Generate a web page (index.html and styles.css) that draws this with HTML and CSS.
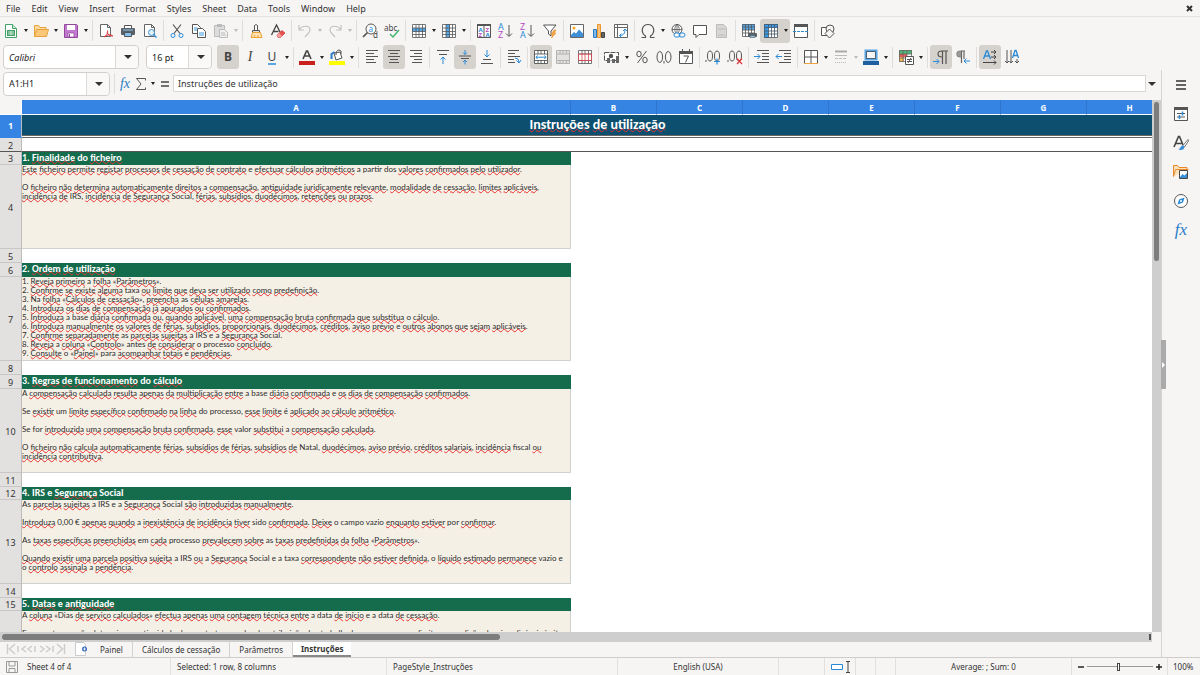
FILE: index.html
```html
<!DOCTYPE html>
<html lang="pt">
<head>
<meta charset="utf-8">
<title>Instruções de utilização</title>
<link rel="stylesheet" href="styles.css">
</head>
<body>
<div class="app">
<header class="menubar">
  <nav class="menus" aria-label="Menu">
    <button>File</button><button>Edit</button><button>View</button><button>Insert</button><button>Format</button><button>Styles</button><button>Sheet</button><button>Data</button><button>Tools</button><button>Window</button><button>Help</button>
  </nav>
  <button class="close" aria-label="Close"><svg width="7" height="7" viewBox="0 0 7 7"><path d="M1 1l5 5M6 1l-5 5" stroke="#333" stroke-width="2"/></svg></button>
</header>

<div class="toolbar">
  <button class="tb" aria-label="New"><svg viewBox="0 0 16 16"><path d="M2.500 1.500h7l4 4v9h-11z" fill="#fff" stroke="#43a267"/><path d="M9.500 1.500v4h4" fill="#cde9d6" stroke="#43a267"/><path d="M4 7h8v6H4z" fill="#43a267"/><path d="M5 9h6M5 11h6M8 8v4" stroke="#fff" stroke-width=".7"/></svg></button><button class="dd" aria-label="New options"></button>
  <button class="tb" aria-label="Open"><svg viewBox="0 0 16 16"><path d="M1.500 13.500v-11h4l1.500 2h6v2" fill="#fdd9a0" stroke="#e8a33d"/><path d="M1.500 13.500l2-7h12l-2 7z" fill="#fcc678" stroke="#e8a33d"/></svg></button><button class="dd" aria-label="Open options"></button>
  <button class="tb" aria-label="Save"><svg viewBox="0 0 16 16"><path d="M1.500 1.500h12l1 1v12h-13z" fill="#c178cf" stroke="#94469f"/><path d="M4 2h8v5H4z" fill="#fff"/><path d="M5 10h6v4H5z" fill="#fff" stroke="#94469f" stroke-width=".7"/><path d="M6.500 11v3" stroke="#94469f"/></svg></button><button class="dd" aria-label="Save options"></button>
  <i class="sep"></i>
  <button class="tb" aria-label="Export PDF"><svg viewBox="0 0 16 16"><path d="M2.500 1.500h7l3 3v9h-10z" fill="#fff" stroke="#666"/><path d="M9.500 1.500v3h3" fill="none" stroke="#666"/><path d="M6 14c3-1 4-4 3.500-6.500M9 9c1 3 3 4 6 4M6.500 13.500c3-2 5-2 8-1" fill="none" stroke="#e0383e"/></svg></button>
  <button class="tb" aria-label="Print"><svg viewBox="0 0 16 16"><path d="M4.500 5V2.500h7V5" fill="#fff" stroke="#555"/><rect x="1" y="5" width="14" height="7" rx="1" fill="#5a6268"/><path d="M3 7h10" stroke="#8dc6ee"/><path d="M4.500 9.500h7v4h-7z" fill="#83beec" stroke="#555"/></svg></button>
  <button class="tb" aria-label="Preview"><svg viewBox="0 0 16 16"><path d="M2.500 1.500h7l3 3v9h-10z" fill="#fff" stroke="#666"/><path d="M9.500 1.500v3h3" fill="none" stroke="#666"/><circle cx="9.500" cy="9.500" r="3" fill="#e3f1fb" stroke="#3a8fd0"/><path d="M11.500 11.500l3 3" stroke="#3a8fd0" stroke-width="1.500"/></svg></button>
  <i class="sep"></i>
  <button class="tb" aria-label="Cut"><svg viewBox="0 0 16 16"><path d="M4 1.500l7 9M12 1.500l-7 9" stroke="#555" stroke-width="1.200"/><circle cx="4" cy="12.500" r="2" fill="none" stroke="#2b8ad6"/><circle cx="12" cy="12.500" r="2" fill="none" stroke="#2b8ad6"/></svg></button>
  <button class="tb" aria-label="Copy"><svg viewBox="0 0 16 16"><path d="M1.500 1.500h5l3 3v6h-8z" fill="#fff" stroke="#555"/><path d="M6.500 5.500h5l3 3v6h-8z" fill="#fff" stroke="#555"/><path d="M3 5h3M3 7h3M8 10h5M8 12h5" stroke="#3a9be0"/></svg></button>
  <button class="tb" aria-label="Paste" disabled><svg viewBox="0 0 16 16"><path d="M1.500 2.500h10v11h-10z" fill="#ddd" stroke="#bbb"/><path d="M4 1h5v3H4z" fill="#bbb"/><path d="M6.500 6.500h5l3 3v5h-8z" fill="#f0f0f0" stroke="#bbb"/><path d="M8 10h4M8 12h5" stroke="#bbb"/></svg></button><button class="dd off" aria-label="Paste options"></button>
  <i class="sep"></i>
  <button class="tb" aria-label="Clone formatting"><svg viewBox="0 0 16 16"><path d="M6.500 7V2.500q1.500-2 3 0V7" fill="#fff" stroke="#555"/><path d="M4.500 7.500h7v2h-7z" fill="#ddd" stroke="#555"/><path d="M4.500 9.500l-1.500 5h11l-1.500-5z" fill="#fde3b5" stroke="#eda033"/><path d="M6 14l1-2M10 14v-2" stroke="#eda033"/></svg></button>
  <button class="tb" aria-label="Clear formatting"><svg viewBox="0 0 16 16"><path d="M1.500 12L6.500 2l3.500 7M3.500 8.500h5" fill="none" stroke="#444" stroke-width="1.300"/><path d="M7 12l5-4.500 3 2.500-4.500 4.500H8z" fill="#e55353" stroke="#c33" stroke-width=".7"/><path d="M7 12l2-2 3 3-1.500 1.500H8z" fill="#f5a0a0"/></svg></button>
  <i class="sep"></i>
  <button class="tb" aria-label="Undo" disabled><svg viewBox="0 0 16 16"><path d="M2 2v5h5M2 7c3-5 11-5 11 0 0 3-3 4-5 7" fill="none" stroke="#c4c2c0" stroke-width="1.200"/></svg></button><button class="dd off" aria-label="Undo options"></button>
  <button class="tb" aria-label="Redo" disabled><svg viewBox="0 0 16 16"><path d="M14 2v5H9M14 7C11 2 3 2 3 7c0 3 3 4 5 7" fill="none" stroke="#c4c2c0" stroke-width="1.200"/></svg></button><button class="dd off" aria-label="Redo options"></button>
  <i class="sep"></i>
  <button class="tb" aria-label="Find and replace"><svg viewBox="0 0 16 16"><circle cx="9" cy="6" r="5" fill="#fff" stroke="#555"/><path d="M5.500 9.500L1 14" stroke="#555" stroke-width="1.700"/><text x="6.500" y="8.500" class="g g-blue">a</text><text x="11" y="15" class="g">d</text></svg></button>
  <button class="tb" aria-label="Spelling"><svg viewBox="0 0 16 16"><text x="0" y="8" class="g">abc</text><path d="M6 11l3 3 6-7" fill="none" stroke="#3fb36b" stroke-width="1.400"/></svg></button>
  <i class="sep"></i>
  <button class="tb" aria-label="Row"><svg viewBox="0 0 16 16"><path d="M1.500 1.500h13v13h-13z" fill="#fff"/><path d="M1 5h14v3.500H1z" fill="#56a8e8"/><path d="M1.500 1.500h13v13h-13zM1.500 5h13M1.500 8.500h13M1.500 11.500h13M5 1.500v13M8 1.500v13M11.500 1.500v13" fill="none" stroke="#555" stroke-width=".8"/></svg></button><button class="dd" aria-label="Row options"></button>
  <button class="tb" aria-label="Column"><svg viewBox="0 0 16 16"><path d="M1.500 1.500h13v13h-13z" fill="#fff"/><path d="M5 1h4v14H5z" fill="#56a8e8"/><path d="M1.500 1.500h13v13h-13zM1.500 5h13M1.500 8.500h13M1.500 11.500h13M5 1.500v13M8.500 1.500v13M11.500 1.500v13" fill="none" stroke="#555" stroke-width=".8"/></svg></button><button class="dd" aria-label="Column options"></button>
  <i class="sep"></i>
  <button class="tb" aria-label="Sort"><svg viewBox="0 0 16 16"><path d="M1.500 1.500h13v13h-13zM8 2v12" fill="#fff" stroke="#555"/><path d="M1 1h14v2H1z" fill="#555"/><text x="2.500" y="8.500" class="s g-blue">A</text><text x="2.500" y="14" class="s g-pink">Z</text><text x="9.500" y="8.500" class="s g-pink">Z</text><text x="9.500" y="14" class="s g-blue">A</text></svg></button>
  <button class="tb" aria-label="Sort ascending"><svg viewBox="0 0 16 16"><text x="0" y="7" class="m g-blue">A</text><text x="0" y="15" class="m g-pink">Z</text><path d="M11 2v11M8 10.500l3 3 3-3" fill="none" stroke="#555"/></svg></button>
  <button class="tb" aria-label="Sort descending"><svg viewBox="0 0 16 16"><text x="0" y="7" class="m g-pink">Z</text><text x="0" y="15" class="m g-blue">A</text><path d="M11 2v11M8 10.500l3 3 3-3" fill="none" stroke="#555"/></svg></button>
  <button class="tb" aria-label="AutoFilter"><svg viewBox="0 0 16 16"><path d="M1.500 2h12.500l-5 6v5l-2.500-2V8z" fill="#fff" stroke="#555"/><path d="M12 7l-3 4.500h2L9.500 15l4.500-5h-2l2-3z" fill="#f7a64a" stroke="#e58a20" stroke-width=".6"/></svg></button>
  <i class="sep"></i>
  <button class="tb" aria-label="Insert image"><svg viewBox="0 0 16 16"><path d="M1.500 1.500h13v13h-13z" fill="#fff" stroke="#666"/><path d="M2 12l3-3 2 1.500 3-4 4 4V14H2z" fill="#3f8fd6"/><circle cx="5" cy="5" r="1.500" fill="#f5a623"/></svg></button>
  <button class="tb" aria-label="Insert chart"><svg viewBox="0 0 16 16"><path d="M2.500 6.500h3v8h-3z" fill="#7db9ec" stroke="#2b7cc7"/><path d="M6.500 1.500h3v13h-3z" fill="#fbc27c" stroke="#e8962e"/><path d="M10.500 9.500h3v5h-3z" fill="#666" stroke="#444"/></svg></button>
  <button class="tb" aria-label="Pivot table"><svg viewBox="0 0 16 16"><path d="M1.500 1.500h13v13h-13zM1.500 4.500h13M4.500 1.500v13" fill="#fff" stroke="#666"/><path d="M6.500 12.500c4 0 5.500-2 5.500-6M10 8l2-2 2 2M8.500 10.500l-2 2 2 2" fill="none" stroke="#2b8ad6"/></svg></button>
  <i class="sep"></i>
  <button class="tb" aria-label="Special character"><svg viewBox="0 0 16 16"><path d="M1.500 14.500h4v-1.500C0 9 2 1.500 8 1.500S16 9 10.500 13v1.500h4" fill="none" stroke="#555" stroke-width="1.200"/></svg></button><button class="dd" aria-label="Special character options"></button>
  <button class="tb" aria-label="Hyperlink"><svg viewBox="0 0 16 16"><circle cx="7" cy="6.500" r="5" fill="#fff" stroke="#555"/><path d="M2 6.500h10M7 1.500v10M7 1.500c-3 3-3 7 0 10M7 1.500c3 3 3 7 0 10" fill="none" stroke="#555" stroke-width=".8"/><rect x="4" y="10" width="6" height="4" rx="2" fill="#fff" stroke="#2b8ad6"/><rect x="9" y="10" width="6" height="4" rx="2" fill="none" stroke="#2b8ad6"/></svg></button>
  <button class="tb" aria-label="Comment"><svg viewBox="0 0 16 16"><path d="M1.500 2.500h13v9H7l-3 3v-3H1.500z" fill="#fff" stroke="#555"/></svg></button>
  <button class="tb" aria-label="Headers and footers" disabled><svg viewBox="0 0 16 16"><path d="M2.500 1.500h7l3 3v10h-10z" fill="#d8d7d5" stroke="#bbb"/><path d="M4 6h7M4 12h7" stroke="#bbb"/></svg></button>
  <i class="sep"></i>
  <button class="tb" aria-label="Print area"><svg viewBox="0 0 16 16"><path d="M1.500 1.500h12v12h-12z" fill="#fff"/><path d="M1 1h13v6H1z" fill="#56a8e8"/><path d="M1.500 1.500h12v12h-12zM1.500 4h12M1.500 7h12M1.500 10h12M4.500 1.500v12M7.500 1.500v12M10.500 1.500v12" fill="none" stroke="#555" stroke-width=".8"/><rect x="7" y="10" width="9" height="4" rx="1" fill="#5a6268"/><path d="M9 12.500h5v2H9z" fill="#8dc6ee" stroke="#555" stroke-width=".6"/></svg></button>
  <span class="split on"><button class="tb" aria-label="Freeze"><svg viewBox="0 0 16 16"><path d="M1.500 1.500h13v13h-13z" fill="#fff"/><path d="M1 1h14v3.500H5.500V15H1z" fill="#3d96e0"/><path d="M1.500 1.500h13v13h-13zM1.500 4.500h13M1.500 8h13M1.500 11h13M5.500 1.500v13M8.500 1.500v13M11.500 1.500v13" fill="none" stroke="#456" stroke-width=".8"/></svg></button><button class="dd" aria-label="Freeze options"></button></span>
  <button class="tb" aria-label="Split window"><svg viewBox="0 0 16 16"><path d="M1.500 1.500h13v13h-13z" fill="#fff" stroke="#555"/><path d="M1 1h14v3H1z" fill="#555"/><path d="M0 8.500h16" stroke="#2b8ad6" stroke-dasharray="3 1"/></svg></button>
  <i class="sep"></i>
  <button class="tb" aria-label="Draw functions"><svg viewBox="0 0 16 16"><path d="M1.500 4.500h8v8h-8z" fill="#fff" stroke="#555"/><circle cx="10" cy="6" r="4" fill="#f6f5f4" stroke="#555"/><path d="M9.500 6l4.500 4.500-4.500 4.500L5 10.500z" fill="#f6f5f4" stroke="#555"/></svg></button>
</div>

<div class="toolbar format">
  <label class="combo font"><select aria-label="Font name"><option>Calibri</option></select></label>
  <label class="combo size"><select aria-label="Font size"><option>16 pt</option></select></label>
  <button class="tb on" aria-label="Bold"><b class="ch">B</b></button>
  <button class="tb" aria-label="Italic"><i class="ch it">I</i></button>
  <button class="tb" aria-label="Underline"><span class="ch un">U</span></button><button class="dd" aria-label="Underline options"></button>
  <i class="sep"></i>
  <button class="tb" aria-label="Font color"><svg viewBox="0 0 16 16"><path d="M4 10L7.500 2h1L12 10M5.500 7h5" fill="none" stroke="#444" stroke-width="1.600"/><path d="M0 12h16v4H0z" fill="#c9211e"/></svg></button><button class="dd" aria-label="Font color options"></button>
  <button class="tb" aria-label="Background color"><svg viewBox="0 0 16 16"><path d="M5 4l6-1 2 6-6 2z" fill="#fff" stroke="#555"/><path d="M7 6q0-5 3-5t2 4" fill="none" stroke="#555"/><path d="M2.500 10V5l3-2" fill="none" stroke="#2b7cc7" stroke-width="2"/><path d="M0 12h16v4H0z" fill="#ff0"/></svg></button><button class="dd" aria-label="Background color options"></button>
  <i class="sep"></i>
  <button class="tb" aria-label="Align left"><svg viewBox="0 0 16 16"><path d="M2 1.500h12M2 4.500h8M2 7.500h12M2 10.500h8M2 13.500h10" stroke="#555"/></svg></button>
  <button class="tb on" aria-label="Align center"><svg viewBox="0 0 16 16"><path d="M2 1.500h12M4 4.500h8M2 7.500h12M4 10.500h8M3 13.500h10" stroke="#555"/></svg></button>
  <button class="tb" aria-label="Align right"><svg viewBox="0 0 16 16"><path d="M2 1.500h12M6 4.500h8M2 7.500h12M6 10.500h8M4 13.500h10" stroke="#555"/></svg></button>
  <i class="sep"></i>
  <button class="tb" aria-label="Align top"><svg viewBox="0 0 16 16"><path d="M2 1.500h12M4 5.500h8" stroke="#555"/><path d="M8 15V8M5.500 10.500L8 8l2.500 2.500" fill="none" stroke="#2b8ad6"/></svg></button>
  <button class="tb on" aria-label="Center vertically"><svg viewBox="0 0 16 16"><path d="M2 7h12M4 9.500h8" stroke="#555"/><path d="M8 1v4.500M6 3.500l2 2 2-2M8 15.500V11M6 13l2-2 2 2" fill="none" stroke="#2b8ad6"/></svg></button>
  <button class="tb" aria-label="Align bottom"><svg viewBox="0 0 16 16"><path d="M2 14.500h12M4 10.500h8" stroke="#555"/><path d="M8 1v7M5.500 5.500L8 8l2.500-2.500" fill="none" stroke="#2b8ad6"/></svg></button>
  <i class="sep"></i>
  <button class="tb" aria-label="Wrap text"><svg viewBox="0 0 16 16"><path d="M2 1.500h11M2 4.500h7M2 7.500h12M2 10.500h6M2 13.500h7" stroke="#555"/><path d="M9 9q4 0 4 4M10.500 11.500l2.500 2.500 2-3" fill="none" stroke="#2b8ad6"/></svg></button>
  <i class="sep"></i>
  <button class="tb on" aria-label="Merge and center"><svg viewBox="0 0 16 16"><path d="M1.500 1.500h13v13h-13z" fill="#fff"/><path d="M1.500 1.500h13v13h-13zM1.500 5h13M1.500 11.500h13M5 1.500v3.500M8 1.500v3.500M11.500 1.500v3.500M5 11.500v3M8 11.500v3M11.500 11.500v3" fill="none" stroke="#444" stroke-width=".8"/><path d="M3 8.200h10M4.500 6.500L3 8.200l1.500 1.800M11.500 6.500L13 8.200l-1.500 1.800" fill="none" stroke="#2b8ad6"/></svg></button>
  <button class="tb" aria-label="Merge" disabled><svg viewBox="0 0 16 16"><path d="M1.500 1.500h13v13h-13zM1.500 5h13M1.500 11.500h13M5 1.500v3.500M8 1.500v3.500M11.500 1.500v3.500M5 11.500v3M8 11.500v3M11.500 11.500v3" fill="#e2e1df" stroke="#b5b3b1"/></svg></button>
  <button class="tb" aria-label="Unmerge"><svg viewBox="0 0 16 16"><path d="M1.500 1.500h13v13h-13zM1.500 5h13M1.500 11.500h13M5 1.500v3.500M8 1.500v3.500M11.500 1.500v3.500M5 11.500v3M8 11.500v3M11.500 11.500v3" fill="#fff" stroke="#555" stroke-width=".8"/><path d="M1.500 5h13v6.500h-13zM5 5v6.500M8 5v6.500M11.500 5v6.500" fill="none" stroke="#e0484c" stroke-width=".8"/></svg></button>
  <i class="sep"></i>
  <button class="tb" aria-label="Currency"><svg viewBox="0 0 16 16"><path d="M.5 3.500h14v8H.5z" fill="#fff" stroke="#555" stroke-dasharray="5 1"/><circle cx="7" cy="7" r="2.200" fill="#555"/><path d="M3 9h3v5H3zM8 10h3v4H8zM12 7h3v7h-3z" fill="#666"/></svg></button><button class="dd" aria-label="Currency options"></button>
  <button class="tb" aria-label="Percent"><svg viewBox="0 0 16 16"><path d="M12.500 2l-9 12" stroke="#555"/><ellipse cx="5" cy="5" rx="2.200" ry="2.800" fill="none" stroke="#555"/><ellipse cx="11" cy="11" rx="2.200" ry="2.800" fill="none" stroke="#555"/></svg></button>
  <button class="tb" aria-label="Number"><svg viewBox="0 0 16 16"><ellipse cx="3.800" cy="8" rx="2.800" ry="5.500" fill="none" stroke="#555"/><ellipse cx="12.200" cy="8" rx="2.800" ry="5.500" fill="none" stroke="#555"/><path d="M8 12v2.500" stroke="#555"/></svg></button>
  <button class="tb" aria-label="Date"><svg viewBox="0 0 16 16"><path d="M1.500 2.500h13v12h-13z" fill="#fff" stroke="#555"/><path d="M1 2h14v3H1zM4 0h1v2H4zM11 0h1v2h-1z" fill="#555"/><path d="M5.500 7h5l-3 6.500" fill="none" stroke="#555"/></svg></button>
  <i class="sep"></i>
  <button class="tb" aria-label="Add decimal"><svg viewBox="0 0 16 16"><ellipse cx="5" cy="7" rx="2.500" ry="5" fill="none" stroke="#555"/><ellipse cx="12" cy="7" rx="2.500" ry="5" fill="none" stroke="#555"/><path d="M1 11v2" stroke="#555"/><path d="M9 12.500h6M12 9.500v6" stroke="#2b8ad6" stroke-width="1.200"/></svg></button>
  <button class="tb" aria-label="Delete decimal"><svg viewBox="0 0 16 16"><ellipse cx="5" cy="7" rx="2.500" ry="5" fill="none" stroke="#555"/><ellipse cx="12" cy="7" rx="2.500" ry="5" fill="none" stroke="#555"/><path d="M1 11v2" stroke="#555"/><path d="M10 9.500l5 5.500M15 9.500L10 15" stroke="#e0383e" stroke-width="1.200"/></svg></button>
  <i class="sep"></i>
  <button class="tb" aria-label="Increase indent"><svg viewBox="0 0 16 16"><path d="M3 1.500h12M8 4.500h7M8 7.500h7M8 10.500h7M3 13.500h12" stroke="#555"/><path d="M0 7.500h6M3.500 5L6 7.500 3.500 10" fill="none" stroke="#2b8ad6"/></svg></button>
  <button class="tb" aria-label="Decrease indent"><svg viewBox="0 0 16 16"><path d="M3 1.500h12M8 4.500h7M8 7.500h7M8 10.500h7M3 13.500h12" stroke="#555"/><path d="M0 7.500h6M2.500 5L0 7.500 2.500 10" fill="none" stroke="#2b8ad6"/></svg></button>
  <i class="sep"></i>
  <button class="tb" aria-label="Borders"><svg viewBox="0 0 16 16"><path d="M1.500 1.500h13v13h-13z" fill="#fff" stroke="#555"/><path d="M8 2v12M2 8h12" stroke="#555"/><path d="M1 14.500h14" stroke="#f0a440"/></svg></button><button class="dd" aria-label="Border options"></button>
  <button class="tb" aria-label="Border style" disabled><svg viewBox="0 0 16 16"><path d="M2 2.500h12" stroke="#aaa" stroke-width="2"/><path d="M2 6.500h12" stroke="#bbb"/><path d="M2 9.500h12" stroke="#bbb" stroke-dasharray="3 1"/><path d="M2 13.500h12" stroke="#bbb" stroke-dasharray="1 1"/></svg></button><button class="dd off" aria-label="Border style options"></button>
  <button class="tb" aria-label="Border color"><svg viewBox="0 0 16 16"><path d="M2.500 1.500h11v9h-11z" fill="#f6f5f4" stroke="#5aa5e4" stroke-width="2"/><path d="M3.500 2.500h9v7h-9z" fill="none" stroke="#345" stroke-width=".8"/><path d="M0 12h16v4H0z" fill="#1f5fa0"/></svg></button><button class="dd" aria-label="Border color options"></button>
  <i class="sep"></i>
  <button class="tb" aria-label="Conditional formatting"><svg viewBox="0 0 16 16"><path d="M1.500 1.500h12v11h-12z" fill="#fff"/><path d="M1 1h13v4H1z" fill="#4fb877"/><path d="M1 5h8v3H1z" fill="#e85a5a"/><path d="M1 8h5v5H1z" fill="#f5b95a"/><path d="M1.500 1.500h12v11h-12zM1.500 5h12M1.500 9h12M5 1.500v11M9 1.500v11" fill="none" stroke="#666" stroke-width=".8"/><path d="M7.500 7.500h8v8h-8z" fill="#fff" stroke="#555"/><path d="M9 10.500h5M9 12.500h5M13 9l-3 5" stroke="#555"/></svg></button><button class="dd" aria-label="Conditional formatting options"></button>
  <i class="sep"></i>
  <button class="tb on" aria-label="Left to right"><svg viewBox="0 0 16 16"><path d="M9 8q-4 0-4-3t4-3h6M9.500 2v13M13 2v13" fill="none" stroke="#555" stroke-width="1.200"/><path d="M0 12.500h6M3.500 10L6 12.500 3.500 15" fill="none" stroke="#2b8ad6"/></svg></button>
  <button class="tb" aria-label="Right to left"><svg viewBox="0 0 16 16"><path d="M6 8Q2 8 2 5t4-3h4M6.500 2v12M9 2v8" fill="none" stroke="#666" stroke-width="1.200"/><path d="M6 8Q2 8 2 5t4-3z" fill="#999"/><path d="M15 12H9M11.500 9.500L9 12l2.500 2.500" fill="none" stroke="#2b8ad6"/></svg></button>
  <i class="sep"></i>
  <button class="tb on" aria-label="Horizontal text"><svg viewBox="0 0 16 16"><path d="M1.500 10L4.500 2h1l3 8M2.500 7h5" fill="none" stroke="#2b8ad6" stroke-width="1.300"/><path d="M9 3h5M12 1l2 2-2 2M9 8h5M12 6l2 2-2 2M1 13.500h13M12 11.500l2 2-2 2" fill="none" stroke="#444"/></svg></button>
  <button class="tb" aria-label="Vertical text"><svg viewBox="0 0 16 16"><path d="M8.500 9L11 1.500h1L14.500 9M9.500 6.500h4" fill="none" stroke="#2b8ad6" stroke-width="1.300"/><path d="M3 1v13M1 12l2 2 2-2M7 1v13M5.500 12L7 14l2-2M13 10v4M11 12l2 2 2-2" fill="none" stroke="#555"/></svg></button>
</div>

<div class="middle">
<main class="work">
  <div class="formula">
    <label class="combo name"><select aria-label="Name box"><option>A1:H1</option></select></label>
    <i class="sep"></i>
    <button class="fb fx" aria-label="Function wizard">fx</button>
    <button class="fb" aria-label="Sum"><svg width="12" height="14" viewBox="0 0 12 14"><path d="M10.500 3.500v-2h-9L6 7l-4.500 5.500h9v-2" fill="none" stroke="#555"/></svg></button>
    <button class="dd" aria-label="Sum options"></button>
    <button class="fb" aria-label="Formula"><svg width="10" height="8" viewBox="0 0 10 8"><path d="M1 2h8M1 6h8" stroke="#444" stroke-width="1.500"/></svg></button>
    <input type="text" class="line" aria-label="Formula input" value="Instruções de utilização">
    <button class="expand" aria-label="Expand formula bar"></button>
  </div>
  <div class="view">
    <div class="canvas">
      <table class="sheet">
        <colgroup><col class="c-num"><col class="c-a"><col><col><col><col><col><col><col></colgroup>
        <thead><tr><th class="corner"></th><th>A</th><th>B</th><th>C</th><th>D</th><th>E</th><th>F</th><th>G</th><th>H</th></tr></thead>
        <tbody>
        <tr class="r-title"><th>1</th><td colspan="8"><div class="spell">Instruções de utilização</div></td></tr>
        <tr class="r-gap r-frozen"><th>2</th><td colspan="8"></td></tr>
        <tr class="r-head short"><th>3</th><td><div class="spell">1. Finalidade do ficheiro</div></td></tr>
        <tr class="r-body"><th>4</th><td><div class="note spell">Este ficheiro permite registar processos de cessação de contrato e efectuar cálculos aritméticos a partir dos valores confirmados pelo utilizador.

O ficheiro não determina automaticamente direitos a compensação, antiguidade juridicamente relevante, modalidade de cessação, limites aplicáveis,
incidência de IRS, incidência de Segurança Social, férias, subsídios, duodécimos, retenções ou prazos.</div></td></tr>
        <tr class="r-gap"><th>5</th><td></td></tr>
        <tr class="r-head"><th>6</th><td><div class="spell">2. Ordem de utilização</div></td></tr>
        <tr class="r-body"><th>7</th><td><div class="note spell">1. Reveja primeiro a folha «Parâmetros».
2. Confirme se existe alguma taxa ou limite que deva ser utilizado como predefinição.
3. Na folha «Cálculos de cessação», preencha as células amarelas.
4. Introduza os dias de compensação já apurados ou confirmados.
5. Introduza a base diária confirmada ou, quando aplicável, uma compensação bruta confirmada que substitua o cálculo.
6. Introduza manualmente os valores de férias, subsídios, proporcionais, duodécimos, créditos, aviso prévio e outros abonos que sejam aplicáveis.
7. Confirme separadamente as parcelas sujeitas a IRS e a Segurança Social.
8. Reveja a coluna «Controlo» antes de considerar o processo concluído.
9. Consulte o «Painel» para acompanhar totais e pendências.</div></td></tr>
        <tr class="r-gap"><th>8</th><td></td></tr>
        <tr class="r-head"><th>9</th><td><div class="spell">3. Regras de funcionamento do cálculo</div></td></tr>
        <tr class="r-body"><th>10</th><td><div class="note spell">A compensação calculada resulta apenas da multiplicação entre a base diária confirmada e os dias de compensação confirmados.

Se existir um limite específico confirmado na linha do processo, esse limite é aplicado ao cálculo aritmético.

Se for introduzida uma compensação bruta confirmada, esse valor substitui a compensação calculada.

O ficheiro não calcula automaticamente férias, subsídios de férias, subsídios de Natal, duodécimos, aviso prévio, créditos salariais, incidência fiscal ou
incidência contributiva.</div></td></tr>
        <tr class="r-gap"><th>11</th><td></td></tr>
        <tr class="r-head short"><th>12</th><td><div class="spell">4. IRS e Segurança Social</div></td></tr>
        <tr class="r-body"><th>13</th><td><div class="note spell">As parcelas sujeitas a IRS e a Segurança Social são introduzidas manualmente.

Introduza 0,00 € apenas quando a inexistência de incidência tiver sido confirmada. Deixe o campo vazio enquanto estiver por confirmar.

As taxas específicas preenchidas em cada processo prevalecem sobre as taxas predefinidas da folha «Parâmetros».

Quando existir uma parcela positiva sujeita a IRS ou a Segurança Social e a taxa correspondente não estiver definida, o líquido estimado permanece vazio e
o controlo assinala a pendência.</div></td></tr>
        <tr class="r-gap"><th>14</th><td></td></tr>
        <tr class="r-head short"><th>15</th><td><div class="spell">5. Datas e antiguidade</div></td></tr>
        <tr class="r-body"><th></th><td><div class="note spell">A coluna «Dias de serviço calculados» efectua apenas uma contagem técnica entre a data de início e a data de cessação.

Esse contagem não determina a antiguidade dos contratos, o valor da retribuição dos trabalhadores ou os prazos, limites e condições legais aplicáveis à situação.</div></td></tr>
        </tbody>
      </table>
    </div>
    <div class="vbar"><div class="vthumb"></div></div>
    <div class="hbar"><div class="hthumb"></div><div class="hgrip"></div></div>
  </div>
  <nav class="tabs" aria-label="Sheets">
    <svg class="nav" viewBox="0 0 60 12"><path d="M1.500 1v10M9 1L3.500 6 9 11M20 3l-4 3 4 3M26 3l-4 3 4 3M34 3l4 3-4 3M40 3l4 3-4 3M51 1l5.500 5-5.500 5M58.500 1v10M12 3v6M29 3v6M47 3v6" fill="none" stroke="#cfcdcb" stroke-width="1.500"/></svg>
    <button class="add" aria-label="Add sheet"><svg width="14" height="14" viewBox="0 0 14 14"><path d="M1.500.5h8l2 2v11h-10z" fill="#fff" stroke="#ccc"/><circle cx="10.500" cy="7" r="2.500" fill="#3568b8"/><path d="M9 7h3M10.500 5.500v3" stroke="#fff" stroke-width=".8"/></svg></button>
    <button class="tab">Painel</button><button class="tab">Cálculos de cessação</button><button class="tab">Parâmetros</button><button class="tab current">Instruções</button>
  </nav>
</main>
<aside class="side">
  <i class="grip"></i>
  <button aria-label="Sidebar settings"><svg viewBox="0 0 16 16"><path d="M3 4h10M3 8h10M3 12h10" stroke="#333" stroke-width="1.500"/></svg></button>
  <button aria-label="Properties"><svg viewBox="0 0 16 16"><path d="M1.500 1.500h13v13h-13z" fill="#fff" stroke="#555"/><path d="M1 1h14v3H1z" fill="#555"/><path d="M4 7.500h8M4 11h8" stroke="#555"/><path d="M9.500 5.500v4M6.500 9v4" stroke="#2b8ad6" stroke-width="1.500"/></svg></button>
  <button aria-label="Styles"><svg viewBox="0 0 16 16"><path d="M1 12L5.500 1.500h1L10 10M2.500 8.500h6" fill="none" stroke="#444" stroke-width="1.600"/><path d="M15 4.500l-5 6 1.500 1.500 4-6z" fill="#fff" stroke="#555" stroke-width=".8"/><path d="M10 10.500c-2 0-2 2-4.500 4 3 1 6 0 6-2.500z" fill="#3a8fd6"/></svg></button>
  <button aria-label="Gallery"><svg viewBox="0 0 16 16"><path d="M.5 12.500v-11h4l1.500 2h8v2M.5 12.500l2-7h13" fill="#fde1b8" stroke="#e8892e"/><path d="M6.500 6.500h8v8h-8z" fill="#fff" stroke="#444"/><path d="M7 13l2.500-3 2 1.500L14 9v5H7z" fill="#3a8fd6"/></svg></button>
  <button aria-label="Navigator"><svg viewBox="0 0 16 16"><circle cx="8" cy="8" r="6.500" fill="#fff" stroke="#555"/><path d="M11.500 4.500l-1.500 5-5.500 2L6 6.500z" fill="#2b8ad6"/><circle cx="8" cy="8" r="1" fill="#fff"/></svg></button>
  <button class="fx" aria-label="Functions">fx</button>
</aside>
</div>

<footer class="status">
  <div class="doc"><svg width="12" height="12" viewBox="0 0 12 12"><path d="M.5.500h11v11H.5zM3 1v4h6V1M3 11V7.500h6V11" fill="none" stroke="#999"/></svg><span>Sheet 4 of 4</span></div>
  <div>Selected: 1 row, 8 columns</div>
  <div>PageStyle_Instruções</div>
  <div class="mid">English (USA)</div>
  <div></div>
  <div class="sel"><svg width="20" height="12" viewBox="0 0 20 12"><path d="M.5 3.500h11v5H.5z" fill="#fff" stroke="#2b8ad6"/><path d="M15 .5h4M15 11.500h4M17 .5v11" stroke="#444"/></svg></div>
  <div></div>
  <div></div>
  <div class="mid">Average: ; Sum: 0</div>
  <div class="zoom"><button aria-label="Zoom out"><svg width="8" height="8" viewBox="0 0 8 8"><path d="M1 4h6" stroke="#222" stroke-width="1.500"/></svg></button><input type="range" aria-label="Zoom" min="0" max="100" value="48"><button aria-label="Zoom in"><svg width="8" height="8" viewBox="0 0 8 8"><path d="M1 4h6M4 1v6" stroke="#222" stroke-width="1.500"/></svg></button></div>
  <div class="pct">100%</div>
</footer>
</div>
<script src="spell.js"></script>
</body>
</html>
```
FILE: styles.css
```css
* { box-sizing: border-box; }
body {
  margin: 0;
  font-family: "Noto Sans", sans-serif;
  font-size: 9px;
  color: #333;
  background: #f6f5f4;
}
button { font: inherit; color: inherit; background: none; border: 0; padding: 0; }
.app { display: flex; flex-direction: column; height: 100vh; overflow: hidden; }

.menubar { display: flex; flex: none; height: 17px; border-bottom: 1px solid #e4e2e0; }
.menus { display: flex; flex: 1; gap: 11px; padding-left: 6px; }
.close { width: 22px; display: flex; align-items: center; justify-content: center; }

.toolbar { display: flex; flex: none; align-items: center; height: 27px; }
.toolbar.format { height: 26px; padding-left: 3px; }
.tb { flex: none; width: 22px; height: 24px; display: flex; align-items: center; justify-content: center; border-radius: 3px; }
.tb svg { width: 16px; height: 16px; overflow: visible; }
.on { background: #d5d1cd; border-radius: 3px; }
.split { display: flex; align-items: center; }
.dd { flex: none; width: 8px; height: 24px; display: flex; align-items: center; justify-content: center; }
.dd::before { content: ""; border: 2px solid transparent; border-top: 3px solid #222; border-bottom: 0; }
.dd.off::before { border-top-color: #bbb; }
.sep { flex: none; width: 1px; height: 21px; margin: 0 2px; background: #e0dedc; }
.g { font: 8px "Noto Sans", sans-serif; fill: #444; }
.s { font: bold 6px "Noto Sans", sans-serif; }
.m { font: 9px "Noto Sans", sans-serif; }
.g-blue { fill: #2b8ad6; }
.g-pink { fill: #b74bc4; }
.ch { font-size: 12px; line-height: 16px; color: #444; }
.it { font-family: "Liberation Serif", serif; font-size: 14px; }
.un { border-bottom: 2px solid #5aa5e4; line-height: 13px; }

.combo { position: relative; flex: none; height: 24px; background: #fff; border: 1px solid #d2cfcc; border-radius: 4px; }
.combo select { appearance: none; width: 100%; height: 100%; padding: 0 26px 0 5px; border: 0; background: none; font: 9px "Noto Sans", sans-serif; color: #222; }
.combo::before { content: ""; position: absolute; right: 0; top: 0; bottom: 0; width: 22px; border-left: 1px solid #dcdad8; background: #faf9f8; border-radius: 0 4px 4px 0; }
.combo::after { content: ""; position: absolute; right: 6px; top: 9px; border: 4px solid transparent; border-top-color: #333; border-bottom: 0; pointer-events: none; }
.combo.font { width: 136px; margin-right: 7px; }
.combo.font select { font-style: italic; }
.combo.size { width: 66px; margin-right: 5px; }
.combo.name { width: 107px; margin-right: 2px; }

.middle { display: flex; flex: 1; min-height: 0; }
.work { display: flex; flex-direction: column; flex: 1; min-width: 0; }
.formula { display: flex; flex: none; align-items: center; height: 30px; padding: 0 4px 3px 3px; }
.fb { flex: none; display: flex; align-items: center; justify-content: center; width: 16px; height: 20px; }
.fb.fx { font: italic 14px "Liberation Serif", serif; }
.fx { color: #2b7cc7; }
.line { flex: 1; min-width: 0; height: 17px; padding: 0 4px; border: 1px solid #dad8d6; background: #fff; font: 9px "Noto Sans", sans-serif; color: #333; }
.expand { width: 11px; display: flex; justify-content: center; }
.expand::before { content: ""; border: 4px solid transparent; border-top-color: #333; border-bottom: 0; }

.view { flex: 1; min-height: 0; display: grid; grid-template: minmax(0, 1fr) 10px / minmax(0, 1fr) 9px; }
.canvas { overflow: hidden; background: #fff; }
.vbar { background: #cecece; padding: 2px 2px 0; }
.vthumb { height: 30%; background: #7d7d7d; border-radius: 3px; }
.hbar { display: flex; justify-content: space-between; padding: 2px 1px 2px 2px; background: #cecece; }
.hthumb { width: 498px; background: #7d7d7d; border-radius: 3px; }
.hgrip { width: 2px; background: #555; }

.sheet { table-layout: fixed; width: 1173px; border-spacing: 0; }
.sheet col { width: 86px; }
.sheet .c-num { width: 22px; }
.sheet .c-a { width: 549px; }
.sheet td, .sheet th { padding: 0; overflow: hidden; }
.sheet thead th { height: 15px; background: #3584e4; color: #fff; font-size: 8px; line-height: 13px; border-right: 1px solid #2f75ca; border-bottom: 1px solid #fff; }
.sheet thead .corner { background: #f6f5f4; border-right-color: #fff; }
.sheet tbody th { padding-top: 2px; background: #e2e1e0; font-size: 9px; font-weight: 400; line-height: 10px; border-right: 1px solid #bbb; border-bottom: 1px solid #c8c7c6; }
.sheet .r-title th { height: 23px; padding: 0; background: #3584e4; color: #fff; font-weight: 700; border-bottom-color: #3584e4; }
.r-title td { background: #0d4f6e; background-clip: padding-box; color: #fff; text-align: center; font: bold 14px/18px Carlito, Lato, sans-serif; border-bottom: 3px double #666; }
.r-gap td { height: 14px; }
.sheet .r-frozen th, .sheet .r-frozen td { border-bottom: 1px solid #555; }
.r-head td { height: 14px; background: #156c4d; color: #fff; font: bold 10px/12px Carlito, Lato, sans-serif; vertical-align: top; }
.r-head.short td { height: 13px; }
.r-body td { height: 84px; background: #f5f0e6; border-right: 1px solid #cfd2d2; border-bottom: 1px solid #cfd2d2; vertical-align: top; }
.note { height: 83px; overflow: hidden; white-space: pre; font: 8px/9px Lato, sans-serif; color: #2c2c2c; }
.spell u { text-decoration: underline wavy #e8322f 1px; text-decoration-skip-ink: none; text-underline-offset: -1px; }

.tabs { display: flex; flex: none; height: 15px; font-size: 8px; }
.nav { width: 60px; height: 12px; margin: 1px 0 0 6px; }
.add { margin: 0 3px 0 8px; width: 14px; }
.tab { padding: 0 9px; border-right: 1px solid #d4d2d0; line-height: 13px; }
.tab.current { padding: 0 8px; background: #fff; font-weight: 700; border-right: 0; border-bottom: 2px solid #888; }

.side { position: relative; flex: none; width: 39px; display: flex; flex-direction: column; align-items: center; gap: 5px; padding: 3px 0 0; border-left: 1px solid #d6d4d2; }
.side button { width: 24px; height: 24px; display: flex; align-items: center; justify-content: center; }
.side svg { width: 16px; height: 16px; }
.side .fx { font: italic 17px "Liberation Serif", serif; }
.grip { position: absolute; left: -1px; top: 46%; width: 5px; height: 49px; background: #aaa; }
.grip::after { content: ""; position: absolute; left: 1px; top: 22px; border: 3px solid transparent; border-left-color: #fff; border-right: 0; }

.status { flex: none; height: 18px; display: grid; grid-template-columns: 171fr 216fr 231fr 161fr 46fr 31fr 20fr 20fr 176fr 96fr 32fr; border-top: 1px solid #cfcdcb; font-size: 8px; }
.status > div { min-width: 0; padding-left: 6px; border-right: 1px solid #e2e0de; display: flex; align-items: center; white-space: nowrap; }
.status > .pct { padding-left: 5px; border-right: 0; }
.status > .mid { justify-content: center; padding: 0; }
.doc { gap: 9px; }
.status > .zoom { gap: 2px; padding: 0 4px 0 5px; }
.zoom button { display: flex; flex: none; }
.zoom input { flex: 1; min-width: 0; margin: 0; height: 10px; appearance: none; background: linear-gradient(#999, #999) center / 100% 1px no-repeat; }
.zoom input::-webkit-slider-thumb { appearance: none; width: 3px; height: 8px; background: #fff; border: 1px solid #444; }
```
FILE: spell.js
```js
const known = new Set(("a e o é as dos um for taxa base data valor do no para partir antes IRS Social Natal fiscal " +
  "A O Se Na Dias As campo processo por sido vazio em").split(" "));

for (const el of document.querySelectorAll(".spell")) {
  const parts = el.textContent.split(/([A-Za-zÀ-ÿ]+)/);
  el.textContent = "";
  for (const part of parts) {
    if (/^[A-Za-zÀ-ÿ]+$/.test(part) && !known.has(part)) {
      const u = document.createElement("u");
      u.textContent = part;
      el.append(u);
    } else {
      el.append(part);
    }
  }
}
```
